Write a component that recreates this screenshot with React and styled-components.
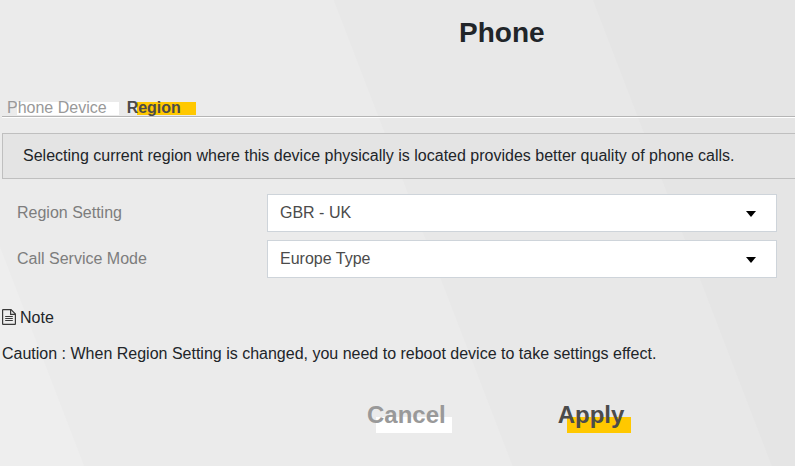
import React, { useState } from 'react';
import styled, { createGlobalStyle } from 'styled-components';

const tabs = ['Phone Device', 'Region'];

const settings = [
  { label: 'Region Setting', value: 'GBR - UK' },
  { label: 'Call Service Mode', value: 'Europe Type' },
];

const NoteIcon = () => (
  <svg width="14" height="16" viewBox="0 0 14 16" fill="none" stroke="#3a3a3a" strokeWidth="1.2">
    <path d="M0.6 1.1Q0.6 0.6 1.1 0.6H9L13.4 5V14.9Q13.4 15.4 12.9 15.4H1.1Q0.6 15.4 0.6 14.9Z" />
    <path d="M8.6 0.6V5.4H13.4" />
    <path d="M3.2 7.5H10.8M3.2 9.5H10.8M3.2 11.5H10.8" strokeWidth="1" />
  </svg>
);

const App = () => {
  const [active, setActive] = useState('Region');

  return (
    <Page>
      <GlobalStyle />
      <Title>Phone</Title>
      <TabBar>
        {tabs.map((tab) => (
          <Tab key={tab} $active={tab === active} onClick={() => setActive(tab)}>{tab}</Tab>
        ))}
      </TabBar>
      <Info>Selecting current region where this device physically is located provides better quality of phone calls.</Info>
      <Form>
        {settings.map(({ label, value }) => (
          <Row key={label}>
            <Label>{label}</Label>
            <Select>
              {value}
              <Caret />
            </Select>
          </Row>
        ))}
      </Form>
      <Note><NoteIcon />Note</Note>
      <Caution>Caution : When Region Setting is changed, you need to reboot device to take settings effect.</Caution>
      <Actions>
        <Button>Cancel</Button>
        <Button $primary>Apply</Button>
      </Actions>
    </Page>
  );
};

/*----------- Styled Components ----------*/
const GlobalStyle = createGlobalStyle`
  body {
    margin: 0;
    overflow: hidden;
  }
  * {
    box-sizing: border-box;
  }
`;

//Diagonal grey bands run across the whole page
const Page = styled.div`
  display: flex;
  flex-direction: column;
  height: 466px;
  padding-left: 2px;
  overflow: hidden;
  font-family: 'Liberation Sans', Arial, sans-serif;
  font-size: 16px;
  line-height: 24px;
  color: #212529;
  background: linear-gradient(69deg, #eeeeee 78px, #ebebeb 79px, #ebebeb 478px, #e8e8e8 479px, #e8e8e8 720px, #e5e5e5 721px);
`;

const Title = styled.h1`
  margin: 16px 0 0 457px;
  font-size: 28px;
  font-weight: bold;
  line-height: 34px;
`;

const TabBar = styled.div`
  display: flex;
  gap: 8px;
  height: 22px;
  margin-top: 46px;
  padding-left: 5px;
  border-bottom: 1px solid #fff;
  box-shadow: inset 0 -1px 0 #b5b5b5;
`;

const Tab = styled.button`
  padding: 1px ${(p) => (p.$active ? '15px' : '12px')} 0 0;
  border: none;
  font: inherit;
  font-weight: ${(p) => (p.$active ? 'bold' : 'normal')};
  line-height: 21px;
  color: ${(p) => (p.$active ? '#4b4b4b' : '#999')};
  background: linear-gradient(${(p) => (p.$active ? '#ffc800, #ffc800' : '#fff, #fff')}) no-repeat 10px 6px / 100% 13px;
  cursor: pointer;
`;

const Info = styled.div`
  height: 46px;
  margin-top: 15px;
  padding: 10px 20px;
  border: 1px solid #bfbfbf;
  border-right: none;
  background: #e4e4e4;
  white-space: nowrap;
`;

const Form = styled.div`
  display: flex;
  flex-direction: column;
  gap: 8px;
  margin-top: 15px;
  padding: 0 18px 0 15px;
`;

const Row = styled.div`
  display: grid;
  grid-template-columns: 250px 510px;
  height: 38px;
`;

const Label = styled.label`
  line-height: 37px;
  color: #7d7d7d;
`;

const Select = styled.div`
  display: flex;
  align-items: center;
  justify-content: space-between;
  padding: 0 20px 1px 12px;
  border: 1px solid #ced4da;
  color: #4b4b4b;
  background: #fff;
`;

const Caret = styled.span`
  margin-top: 2px;
  border: 5px solid transparent;
  border-top: 6px solid #000;
  border-bottom: none;
`;

const Note = styled.div`
  display: flex;
  align-items: center;
  gap: 4px;
  margin-top: 28px;

  svg {
    margin-top: -2px;
  }
`;

const Caution = styled.p`
  margin: 12px 0 0;
`;

const Actions = styled.div`
  display: flex;
  gap: 106px;
  margin: 32px 0 0 365px;
`;

const Button = styled.button`
  padding: 0 ${(p) => (p.$primary ? '7px' : '6px')} 1px 0;
  border: none;
  font: inherit;
  font-size: 24px;
  font-weight: bold;
  line-height: 34px;
  color: ${(p) => (p.$primary ? '#4b4b4b' : '#999')};
  background: linear-gradient(${(p) => (p.$primary ? '#ffc800, #ffc800' : '#fff, #fff')}) no-repeat 9px 19px / 100% 16px;
  cursor: pointer;
`;

export default App;
